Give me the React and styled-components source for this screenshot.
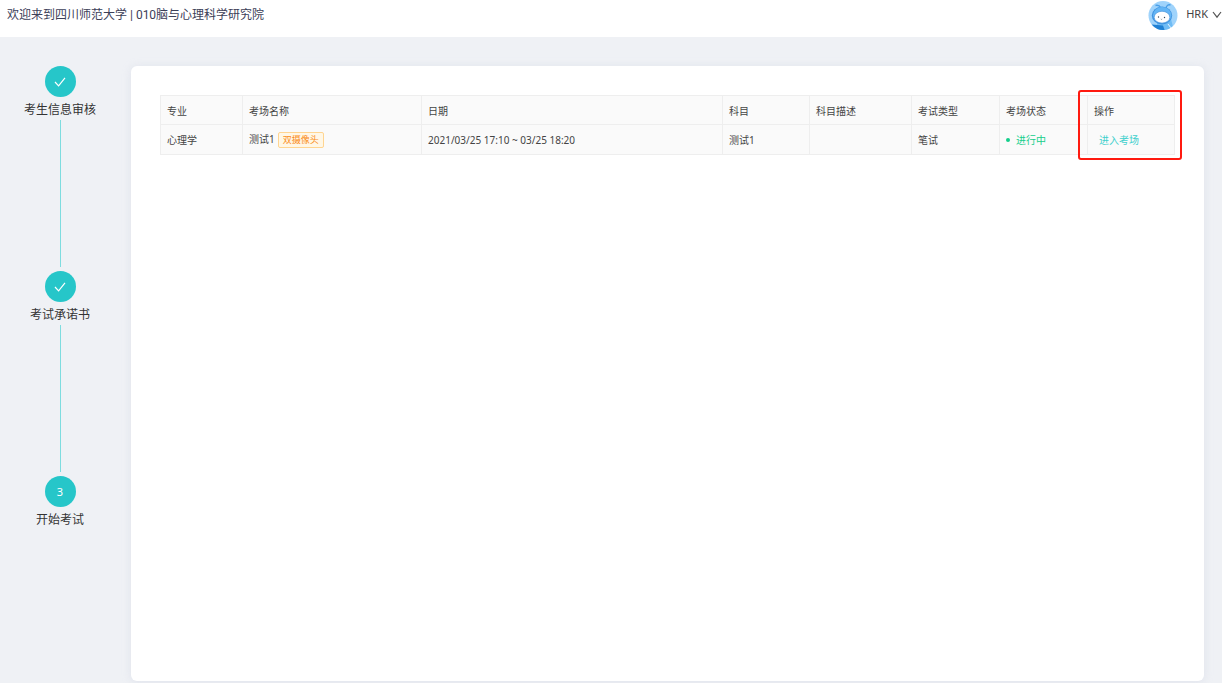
import React from "react";
import styled, { createGlobalStyle } from "styled-components";

const steps = [
  { title: "考生信息审核", done: true },
  { title: "考试承诺书", done: true },
  { title: "开始考试", done: false },
];

const exams = [
  {
    major: "心理学",
    room: "测试1",
    tag: "双摄像头",
    date: "2021/03/25 17:10 ~ 03/25 18:20",
    subject: "测试1",
    description: "",
    type: "笔试",
    status: "进行中",
  },
];

function CheckIcon() {
  return (
    <svg width="12" height="12" viewBox="0 0 12 12" fill="none">
      <path d="M1 6L4.600 9.800L11 1.800" stroke="#fff" strokeWidth="1.2" />
    </svg>
  );
}

function ArrowDown() {
  return (
    <svg width="10" height="8" viewBox="0 0 10 8" fill="none">
      <path d="M1 1L5 6.2L9 1" stroke="#555" strokeWidth="1.2" />
    </svg>
  );
}

function Avatar() {
  return (
    <svg width="30" height="30" viewBox="0 0 30 30">
      <defs>
        <clipPath id="avatar">
          <circle cx="15" cy="15.500" r="14.500" />
        </clipPath>
      </defs>
      <g clipPath="url(#avatar)">
        <rect width="30" height="31" fill="#9fd3fb" />
        <path d="M13 8Q11 4.500 7.500 5.500M18 8Q19 4 22.500 5" stroke="#4a9fe8" strokeWidth="1.400" fill="none" />
        <path d="M9 22L23 19L26 31H9Z" fill="#6fbcf5" />
        <ellipse cx="14" cy="15.500" rx="10.200" ry="9" fill="#3f93e0" />
        <ellipse cx="14.200" cy="15.200" rx="9.200" ry="8.200" fill="#63b5f5" />
        <ellipse cx="14" cy="17.200" rx="7.800" ry="5.900" fill="#fff" stroke="#3f8fd8" strokeWidth="0.600" />
        <circle cx="10.500" cy="17" r="0.700" fill="#345" />
        <circle cx="16.500" cy="17.500" r="0.700" fill="#345" />
        <path d="M12.800 19Q13.500 19.800 14.200 19" stroke="#345" strokeWidth="0.500" fill="none" />
        <path d="M4 24.500L15 25.500L17 31H6Z" fill="#1f80d4" />
        <path d="M20 24L23 28" stroke="#e8f5ff" strokeWidth="1" />
      </g>
    </svg>
  );
}

function StepList() {
  return (
    <Steps>
      {steps.map((step, index) => (
        <Step key={step.title}>
          <StepIcon>{step.done ? <CheckIcon /> : index + 1}</StepIcon>
          <StepTitle>{step.title}</StepTitle>
          {index < steps.length - 1 && <StepLine />}
        </Step>
      ))}
    </Steps>
  );
}

function ExamTable() {
  return (
    <TableBox>
      <Table>
        <colgroup>
          <Col $width={82} />
          <Col $width={179} />
          <Col />
          <Col $width={87} />
          <Col $width={102} />
          <Col $width={88} />
          <Col $width={88} />
          <Col $width={87} />
        </colgroup>
        <thead>
          <tr>
            <Th>专业</Th>
            <Th>考场名称</Th>
            <Th>日期</Th>
            <Th>科目</Th>
            <Th>科目描述</Th>
            <Th>考试类型</Th>
            <Th>考场状态</Th>
            <Th>操作</Th>
          </tr>
        </thead>
        <tbody>
          {exams.map((exam, index) => (
            <tr key={index}>
              <Td>{exam.major}</Td>
              <Td>
                {exam.room}
                <Tag>{exam.tag}</Tag>
              </Td>
              <Td>{exam.date}</Td>
              <Td>{exam.subject}</Td>
              <Td>{exam.description}</Td>
              <Td>{exam.type}</Td>
              <Td>
                <Status>{exam.status}</Status>
              </Td>
              <Td>
                <EnterButton type="button">进入考场</EnterButton>
              </Td>
            </tr>
          ))}
        </tbody>
      </Table>
      <Highlight />
    </TableBox>
  );
}

function App() {
  return (
    <>
      <GlobalStyle />
      <Page>
        <Header>
          <Title>欢迎来到四川师范大学 | 010脑与心理科学研究院</Title>
          <UserButton type="button">
            <Avatar />
            <UserName>HRK</UserName>
            <ArrowDown />
          </UserButton>
        </Header>
        <Body>
          <StepList />
          <Card>
            <ExamTable />
          </Card>
        </Body>
      </Page>
    </>
  );
}

export default App;

const GlobalStyle = createGlobalStyle`
  * {
    box-sizing: border-box;
  }
  body {
    margin: 0;
    background: #eff1f5;
    color: #444;
    font-family: "Noto Sans", "Noto Sans CJK SC", sans-serif;
    font-size: 12px;
  }
  button {
    border: none;
    background: none;
    padding: 0;
    font: inherit;
    cursor: pointer;
  }
`;

const Page = styled.div`
  display: flex;
  flex-direction: column;
  min-height: 100vh;
`;

const Header = styled.header`
  display: flex;
  align-items: flex-start;
  justify-content: space-between;
  height: 37px;
  padding-left: 7px;
  background: #fff;
`;

const Title = styled.h1`
  margin: 0;
  color: #3c4058;
  font-family: Roboto, "Noto Sans CJK SC", sans-serif;
  font-size: 12px;
  font-weight: 400;
  line-height: 30px;
`;

const UserButton = styled.button`
  display: flex;
  align-items: flex-start;
  color: #444;

  svg:last-child {
    margin-top: 11px;
  }
`;

const UserName = styled.span`
  margin: 0 4px 0 8px;
  font-size: 11px;
  line-height: 28px;
`;

const Body = styled.div`
  display: flex;
  flex: 1;
  padding: 29px 18px 2px 0;
`;

const Steps = styled.ol`
  width: 120px;
  margin: 0 11px 0 0;
  padding: 0;
  list-style: none;
`;

const Step = styled.li`
  display: flex;
  flex-direction: column;
  align-items: center;
`;

const StepIcon = styled.span`
  display: flex;
  align-items: center;
  justify-content: center;
  width: 31px;
  height: 31px;
  border-radius: 50%;
  background: #26c6c9;
  color: #fff;
  font-size: 11px;
`;

const StepTitle = styled.span`
  margin-top: 3px;
  color: #333;
  line-height: 20px;
`;

const StepLine = styled.span`
  width: 1px;
  height: 147px;
  margin-bottom: 4px;
  background: #7edcdf;
`;

const Card = styled.main`
  flex: 1;
  padding: 29px;
  border-radius: 6px;
  background: #fff;
  box-shadow: 0 1px 8px rgba(200, 206, 222, 0.4);
`;

const TableBox = styled.div`
  position: relative;
`;

const Table = styled.table`
  width: 100%;
  table-layout: fixed;
  border-collapse: collapse;
  background: #fafafa;
  font-size: 10px;
`;

const Col = styled.col`
  width: ${(props) => (props.$width ? props.$width + "px" : "auto")};
`;

const Th = styled.th`
  height: 29px;
  padding: 0 6px;
  border: 1px solid #eee;
  font-weight: 400;
  text-align: left;
`;

const Td = styled.td`
  height: 30px;
  padding: 0 6px;
  border: 1px solid #eee;
  white-space: nowrap;
`;

const Tag = styled.span`
  display: inline-block;
  margin-left: 3px;
  padding: 0 4px;
  border: 1px solid #ffd591;
  border-radius: 2px;
  background: #fff7e6;
  color: #fa8c16;
  font-size: 9px;
  line-height: 14px;
`;

const Status = styled.span`
  display: flex;
  align-items: center;
  gap: 6px;
  color: #13ce8b;

  &::before {
    content: "";
    width: 4px;
    height: 4px;
    border-radius: 50%;
    background: #13ce8b;
  }
`;

const EnterButton = styled.button`
  margin-left: 5px;
  color: #3fd0cd;
`;

/* frame over the action column */
const Highlight = styled.div`
  position: absolute;
  top: -5px;
  right: -7px;
  bottom: -5px;
  width: 104px;
  border: 2px solid #ff1a10;
  border-radius: 3px;
  pointer-events: none;
`;
